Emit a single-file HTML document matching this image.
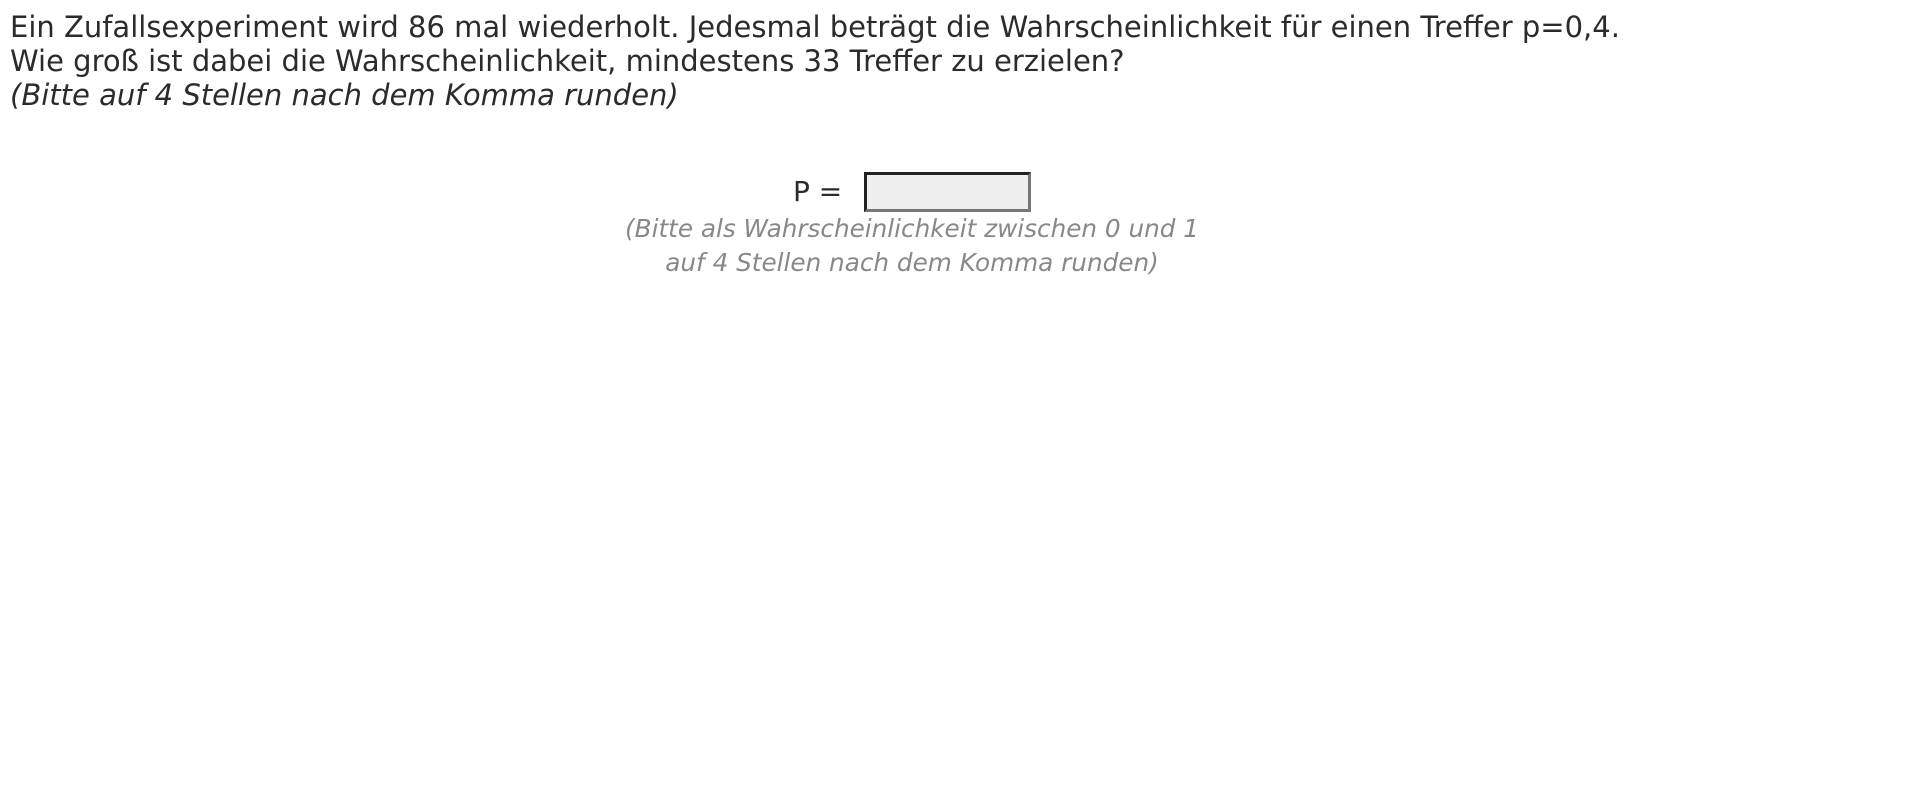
<!DOCTYPE html>
<html><head><meta charset="utf-8"><style>
html,body{margin:0;padding:0;background:#fff;width:1920px;height:810px;overflow:hidden}
body{font-family:"DejaVu Sans","Liberation Sans",sans-serif;color:#2b2b2b}
.q{position:absolute;left:10px;top:10px;font-size:29px;line-height:34px;white-space:nowrap}
.p{position:absolute;left:793px;top:175px;font-size:28px;line-height:34px}
.box{position:absolute;left:864px;top:172px;width:167px;height:40px;box-sizing:border-box;background:#eee;border:3px solid;border-color:#222 #777 #777 #222}
.hint{position:absolute;left:0;width:1824px;top:212px;text-align:center;font-style:italic;color:#888;font-size:24.7px;line-height:34px}
</style></head><body>
<div class="q">Ein Zufallsexperiment wird 86 mal wiederholt. Jedesmal beträgt die Wahrscheinlichkeit für einen Treffer p=0,4.<br>Wie groß ist dabei die Wahrscheinlichkeit, mindestens 33 Treffer zu erzielen?<br><i>(Bitte auf 4 Stellen nach dem Komma runden)</i></div>
<div class="p">P =</div>
<div class="box"></div>
<div class="hint">(Bitte als Wahrscheinlichkeit zwischen 0 und 1<br>auf 4 Stellen nach dem Komma runden)</div>
</body></html>
